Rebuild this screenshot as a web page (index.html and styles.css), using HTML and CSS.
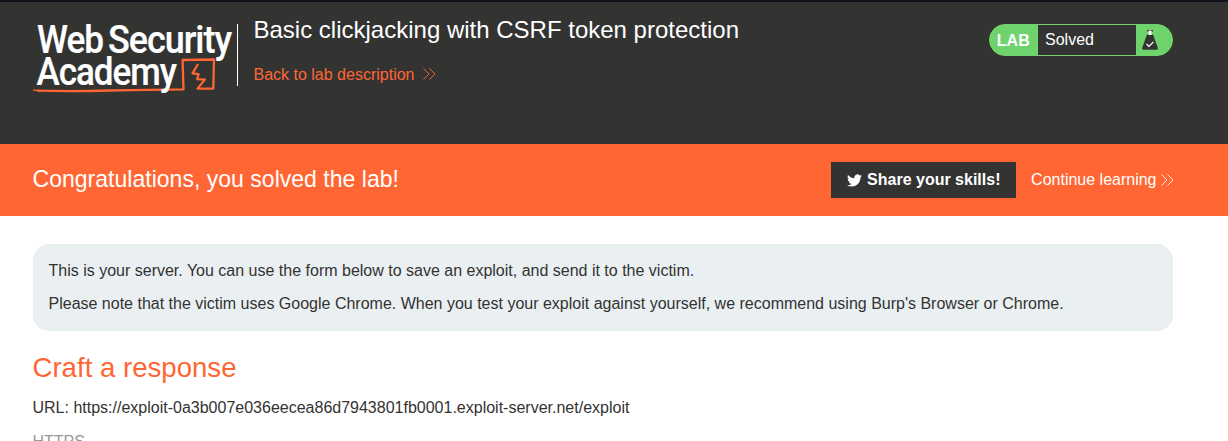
FILE: index.html
```html
<!DOCTYPE html>
<html lang="en">
<head>
<meta charset="utf-8">
<title>Basic clickjacking with CSRF token protection</title>
<link rel="stylesheet" href="styles.css">
</head>
<body>
<header class="lab-header">
  <svg class="logo" width="205" height="76" viewBox="30 20 205 76" role="img" aria-label="Web Security Academy">
    <g class="logo-mark">
      <path d="M37 90.600 Q70 91.500 110 90.500 T183.500 89.300 L182.600 60 L214 59.500 L213.300 88.500 L197.500 88.600 L204.800 79.600 L197.200 79.200 L198.500 74.200 L192.500 73.300 L198 64"/>
      <path class="tail" d="M33 90.200 L42 90.900"/>
    </g>
    <g class="logo-text">
      <text x="37" y="52.700" textLength="66" lengthAdjust="spacingAndGlyphs">Web</text>
      <text x="108" y="52.700" textLength="123" lengthAdjust="spacingAndGlyphs">Security</text>
      <text x="36.500" y="85" textLength="139.500" lengthAdjust="spacingAndGlyphs">Academy</text>
    </g>
  </svg>
  <div class="title-block">
    <h2>Basic clickjacking with CSRF token protection</h2>
    <a class="back">Back to lab description
      <svg width="13" height="12" viewBox="0 0 13 12"><path d="M.5.5 6 6 .5 11.500M6.500.5 12 6 6.500 11.500"/></svg></a>
  </div>
  <div class="lab-status">
    <b>LAB</b>
    <span>Solved</span>
    <svg width="16" height="20" viewBox="0 0 16 20">
      <path fill="#333332" d="M5 4.500h6l4.700 13q.7 2.300-1.500 2.300H1.800q-2.200 0-1.500-2.300z"/>
      <path fill="#333332" d="M5 0h6v1.500H5z"/>
      <path fill="#fff" d="M6.500 .6h3V5h-3z"/>
      <path fill="none" stroke="#fff" stroke-width="1.200" d="M4.500 14l2.500 2.500 4.500-4.700"/>
    </svg>
  </div>
</header>
<section class="banner">
  <h4>Congratulations, you solved the lab!</h4>
  <a class="share">
    <svg width="15" height="15" viewBox="0 0 24 24"><path d="M23.950 4.570a10 10 0 0 1-2.820.770 4.960 4.960 0 0 0 2.160-2.720c-.950.550-2 .950-3.130 1.180a4.920 4.920 0 0 0-8.380 4.480C7.690 8.100 4.070 6.130 1.640 3.160a4.820 4.820 0 0 0-.670 2.480c0 1.710.870 3.210 2.190 4.100a4.900 4.900 0 0 1-2.230-.620v.060a4.920 4.920 0 0 0 3.950 4.830 5 5 0 0 1-2.210.080 4.940 4.940 0 0 0 4.600 3.420A9.870 9.870 0 0 1 0 19.540a14 14 0 0 0 7.550 2.210c9.050 0 14-7.500 14-13.980 0-.210 0-.420-.020-.630a9.940 9.940 0 0 0 2.420-2.570z"/></svg>
    Share your skills!</a>
  <a class="continue">Continue learning
    <svg width="13" height="12" viewBox="0 0 13 12"><path d="M.5.5 6 6 .5 11.500M6.500.5 12 6 6.500 11.500"/></svg></a>
</section>
<main>
  <div class="notice">
    <p>This is your server. You can use the form below to save an exploit, and send it to the victim.</p>
    <p>Please note that the victim uses Google Chrome. When you test your exploit against yourself, we recommend using Burp's Browser or Chrome.</p>
  </div>
  <h3>Craft a response</h3>
  <p class="url">URL: https://exploit-0a3b007e036eecea86d7943801fb0001.exploit-server.net/exploit</p>
  <label>HTTPS</label>
</main>
</body>
</html>
```
FILE: styles.css
```css
* { box-sizing: border-box; }
html, body { height: 441px; overflow: hidden; }
body { margin: 0; background: #fff; color: #333332; font: 16px/20px "Liberation Sans", Arial, sans-serif; }
h2, h3, h4, p { margin: 0; font-weight: 400; }
svg { display: block; flex: none; }
.lab-header { height: 144px; background: #333332; border-top: 2px solid #10131c; padding: 18px 55px 0 30px; display: flex; align-items: flex-start; }
.logo { overflow: visible; }
.logo-text { font: 500 38px Roboto, sans-serif; letter-spacing: -1.1px; fill: #fff; stroke: #fff; stroke-width: .2; }
.logo-mark { fill: none; stroke: #f63; stroke-width: 2.3; stroke-linejoin: round; }
.tail { stroke-width: 1.2; }
.title-block { margin: 4px 0 0 2px; height: 62px; border-left: 1px solid #fff; padding-left: 15.5px; color: #fff; }
.title-block h2 { font-size: 24px; line-height: 28px; margin-top: -8px; white-space: nowrap; }
.back { display: flex; align-items: center; gap: 8.5px; margin-top: 21px; color: #f63; }
.back svg, .continue svg { fill: none; stroke: currentColor; stroke-width: .9; }
.back svg { margin-top: -2px; }
.lab-status { margin: 4px 0 0 auto; width: 184px; height: 32px; border: 1px solid #6fd36d; border-radius: 16px; background: #6fd36d; display: flex; align-items: center; color: #fff; }
.lab-status b { width: 48px; padding: 1px 0 0 6.8px; }
.lab-status span { width: 98px; height: 30px; line-height: 30px; padding-left: 7px; background: #333332; }
.lab-status svg { margin-left: 6px; }
.banner { height: 72px; background: #f63; color: #fff; padding: 0 54.5px 0 32.5px; display: flex; align-items: center; }
.banner h4 { font-size: 23.05px; line-height: 28px; margin: -2px auto 0 0; }
.share { display: flex; align-items: center; gap: 5px; width: 185px; height: 36px; padding-left: 16px; background: #333332; font-weight: 700; white-space: nowrap; }
.share svg { fill: #fff; }
.continue { display: flex; align-items: center; gap: 4px; margin-left: 15px; }
main { padding: 28px 55px 0 32.5px; }
.notice { height: 87px; padding: 17px 16px; border-radius: 16px; background: #eaf0f2; }
.notice p + p { margin-top: 13px; }
h3 { font-size: 27.6px; line-height: 32px; margin-top: 21px; color: #f63; }
.url { margin-top: 14px; }
label { display: block; margin-top: 14px; color: #999; }
```
